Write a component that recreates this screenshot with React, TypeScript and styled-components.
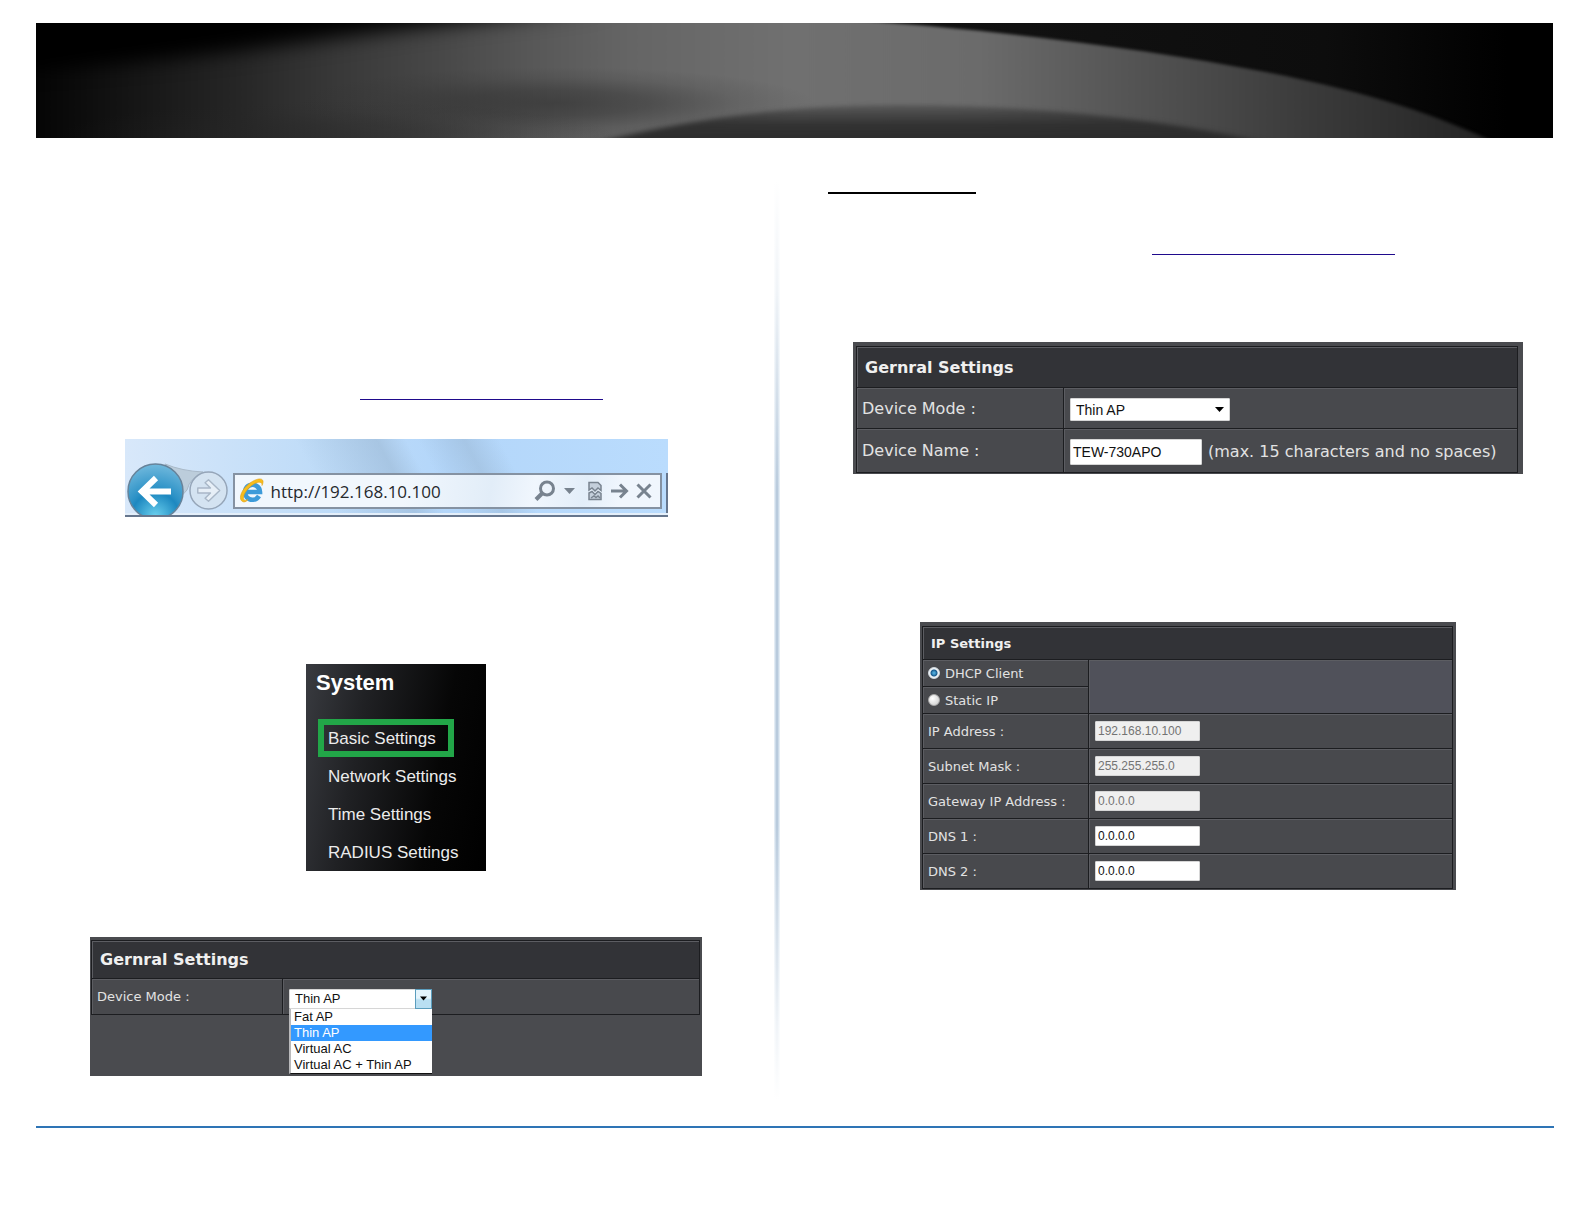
import React from "react";
import styled, { createGlobalStyle, css } from "styled-components";

const controlFont = `"Liberation Sans", Arial, sans-serif`;
const uiFont = `"DejaVu Sans", Verdana, sans-serif`;

const GlobalStyle = createGlobalStyle`
  *, *::before, *::after { box-sizing: border-box; }
  body { margin: 0; background: #fff; font-family: ${controlFont}; }
  button, input, select { font-family: ${controlFont}; }
`;

const Page = styled.div`
  padding-top: 23px;
`;

const Banner = styled.header`
  height: 115px;
  margin: 0 31px 0 36px;
  background: #000;
  svg { display: block; width: 100%; height: 100%; }
`;

const Columns = styled.main`
  display: grid;
  grid-template-columns: minmax(0, 1fr) 72px minmax(0, 1fr);
  padding: 0 36px 50px;
`;

const Column = styled.section<{ $top: number }>`
  display: flex;
  flex-direction: column;
  align-items: center;
  padding-top: ${(p) => p.$top}px;
`;

const Divider = styled.div`
  width: 6px;
  margin: 42px 0 -24px 18px;
  background:
    linear-gradient(to bottom, #fff 0%, rgba(255, 255, 255, 0.8) 12%, rgba(255, 255, 255, 0) 34%, rgba(255, 255, 255, 0) 70%, rgba(255, 255, 255, 0.8) 92%, #fff 100%),
    linear-gradient(to right, #eef5fb, #b9cbdd 40%, #b9cbdd 60%, #eef6fc);
`;

const FooterRule = styled.hr`
  height: 2px;
  margin: 0 30px 0 36px;
  border: 0;
  background: #2e74b5;
`;

const TitleRule = styled.div`
  align-self: flex-start;
  width: 148px;
  height: 24px;
  border-bottom: 2px solid #000;
`;

const RuleLink = styled.a`
  align-self: flex-start;
  display: block;
  width: 243px;
  height: 20px;
  margin-left: 324px;
  border-bottom: 1px solid #1f0a8c;
`;

const Spacer = styled.div<{ $h: number }>`
  flex: none;
  height: ${(p) => p.$h}px;
`;

/* Browser bar */

const BrowserBar = styled.div`
  width: 100%;
  max-width: 543px;
  height: 78px;
  display: flex;
  align-items: flex-start;
  padding: 24px 0 0 2px;
  overflow: hidden;
  border-bottom: 2px solid #66768d;
  background:
    linear-gradient(to bottom, transparent 74px, #e4effa 74px),
    linear-gradient(62deg, transparent 36%, rgba(150, 178, 205, 0.5) 50%, transparent 55%, transparent 57%, rgba(150, 178, 205, 0.45) 65%, transparent 71%),
    linear-gradient(to right, #d8e8fa, #bfdcf8 35%, #b3d6fa 60%, #badcfd);
`;

const NavButton = styled.button<{ $size: number; $drop: number }>`
  flex: none;
  width: ${(p) => p.$size}px;
  height: ${(p) => p.$size}px;
  margin: ${(p) => p.$drop}px 5px 0 0;
  padding: 0;
  border: 0;
  background: none;
  svg { display: block; width: 100%; height: 100%; overflow: visible; }
`;

const AddressBox = styled.label`
  flex: 1;
  min-width: 0;
  height: 36px;
  margin-top: 10px;
  display: flex;
  align-items: center;
  padding: 0 4px;
  border: 2px solid #8592a2;
  background: linear-gradient(100deg, #f1f7fd 40%, #e2edf8 60%, #f0f6fd 70%, #e3eef9 82%, #f0f6fd 90%);
`;

const AddressInput = styled.input`
  flex: 1;
  min-width: 0;
  height: 28px;
  margin-left: 6px;
  padding: 0;
  border: 0;
  outline: 0;
  background: transparent;
  color: #26292d;
  font: 17px "Open Sans", "Noto Sans", sans-serif;
`;

const Tool = styled.button<{ $w: number }>`
  flex: none;
  width: ${(p) => p.$w}px;
  height: 24px;
  display: flex;
  align-items: center;
  justify-content: center;
  padding: 0;
  border: 0;
  background: none;
`;

const NextEdge = styled.div`
  width: 2px;
  height: 40px;
  margin: 10px 0 0 4px;
  background: #66768d;
`;

/* System menu */

const SystemMenu = styled.nav`
  width: 180px;
  height: 207px;
  padding-top: 6px;
  background: linear-gradient(100deg, #393b40 0%, #202124 30%, #060606 70%, #000 100%);
  color: #ececec;
`;

const MenuTitle = styled.h2`
  margin: 0 0 24px 10px;
  font-size: 22px;
  line-height: 25px;
  color: #fff;
`;

const MenuList = styled.ul`
  margin: 0;
  padding: 0 0 0 12px;
  list-style: none;
`;

const MenuLink = styled.a<{ $active?: boolean }>`
  display: block;
  width: fit-content;
  height: 38px;
  padding: 1px 12px 0 4px;
  border: 6px solid ${(p) => (p.$active ? "#22a648" : "transparent")};
  color: inherit;
  font-size: 17px;
  line-height: 26px;
  white-space: nowrap;
  text-decoration: none;
`;

/* Settings panels */

const Panel = styled.div<{ $w: number; $pad: string }>`
  width: 100%;
  max-width: ${(p) => p.$w}px;
  padding: ${(p) => p.$pad};
  background: #4a4b4f;
`;

const Table = styled.table<{ $size: number }>`
  width: 100%;
  table-layout: fixed;
  border-collapse: separate;
  border-spacing: 0;
  border: solid #1c1d20;
  border-width: 0 1px 1px 0;
  font-family: ${uiFont};
  font-size: ${(p) => p.$size}px;
  color: #e2e2e2;
`;

const NameCol = styled.col<{ $w: number }>`
  width: ${(p) => p.$w}px;
`;

const cell = css`
  padding: 0 0 0 6px;
  border: solid #1c1d20;
  border-width: 1px 0 0 1px;
  box-shadow: inset 1px 1px #5c5d62;
  text-align: left;
  white-space: nowrap;
`;

const Head = styled.th<{ $h: number; $size: number }>`
  ${cell}
  height: ${(p) => p.$h}px;
  padding-left: 8px;
  background: #323337;
  color: #f0f0f0;
  font-size: ${(p) => p.$size}px;
`;

const Name = styled.th<{ $h: number }>`
  ${cell}
  height: ${(p) => p.$h}px;
  padding-left: 5px;
  font-weight: normal;
  background: #48494d;
`;

const Value = styled.td<{ $plain?: boolean; $drop?: number }>`
  ${cell}
  padding-top: ${(p) => p.$drop ?? 0}px;
  background: ${(p) => (p.$plain ? "#50515a" : "#48494d")};
`;

const Line = styled.div`
  display: flex;
  align-items: center;
  gap: 6px;
`;

const TextBox = styled.input<{ $w: number; $h: number; $size: number }>`
  display: block;
  width: ${(p) => p.$w}px;
  height: ${(p) => p.$h}px;
  padding: 0 2px;
  border: 1px solid #d6d6d6;
  border-radius: 1px;
  background: #fff;
  color: #111;
  font-size: ${(p) => p.$size}px;
  &:disabled { background: #efefef; color: #737373; }
`;

const SelectWrap = styled.div<{ $w: number }>`
  position: relative;
  width: ${(p) => p.$w}px;
`;

const SelectBox = styled.select<{ $h: number; $size: number }>`
  appearance: none;
  display: block;
  width: 100%;
  height: ${(p) => p.$h}px;
  padding: 0 20px 0 5px;
  border: 1px solid #d6d6d6;
  border-radius: 1px;
  background: #fff;
  color: #111;
  font-size: ${(p) => p.$size}px;
`;

const Arrow = styled.span<{ $boxed?: boolean }>`
  position: absolute;
  top: 0;
  right: 0;
  bottom: 0;
  width: ${(p) => (p.$boxed ? 17 : 22)}px;
  display: flex;
  align-items: center;
  justify-content: center;
  pointer-events: none;
  ${(p) =>
    p.$boxed &&
    css`
      border: 1px solid #5b9dbd;
      background: linear-gradient(#e4f4fc 45%, #b9dff2 55%);
    `}
`;

const OptionList = styled.ul`
  position: absolute;
  top: 100%;
  left: 0;
  right: 0;
  margin: 0;
  padding: 0;
  list-style: none;
  border: solid #b9b9bb;
  border-width: 0 0 0 2px;
  border-bottom: 1px solid #111;
  background: #fff;
  color: #111;
  font: 13px/16px ${controlFont};
`;

const Option = styled.li<{ $selected?: boolean }>`
  height: 16px;
  padding-left: 3px;
  ${(p) => p.$selected && css`background: #3399ff; color: #fff;`}
`;

const RadioLabel = styled.label`
  display: flex;
  align-items: center;
  gap: 5px;
`;

const Radio = styled.input`
  appearance: none;
  width: 12px;
  height: 12px;
  margin: 0;
  border: 1px solid #aaa;
  border-radius: 50%;
  background: radial-gradient(circle at 35% 35%, #fff, #c8c8c8);
  &:checked {
    border-color: #d4dce2;
    background: radial-gradient(circle at 50% 50%, #4aa5d6 0 1px, #17598c 3px, #eef3f6 4px);
  }
`;

const DownArrow = ({ size = 9 }: { size?: number }) => (
  <svg width={size} height="5" viewBox="0 0 9 5" aria-hidden="true">
    <path d="M0 0H9L4.500 5Z" fill="#000" />
  </svg>
);

const BannerArt = () => (
  <svg viewBox="0 0 1517 115" preserveAspectRatio="none" colorInterpolationFilters="sRGB" aria-hidden="true">
    <defs>
      <linearGradient id="right">
        <stop offset="0.55" stopColor="#131313" />
        <stop offset="0.85" stopColor="#0d0d0d" />
        <stop offset="0.97" stopColor="#000" />
      </linearGradient>
      <linearGradient id="sweep" gradientUnits="userSpaceOnUse" x1="0" x2="1450" y1="0" y2="0">
        <stop offset="0" stopColor="#050505" />
        <stop offset="0.07" stopColor="#161616" />
        <stop offset="0.14" stopColor="#262626" />
        <stop offset="0.21" stopColor="#393939" />
        <stop offset="0.28" stopColor="#484848" />
        <stop offset="0.345" stopColor="#585858" />
        <stop offset="0.41" stopColor="#656565" />
        <stop offset="0.52" stopColor="#707070" />
        <stop offset="0.65" stopColor="#6b6b6b" />
        <stop offset="0.76" stopColor="#535353" />
        <stop offset="0.87" stopColor="#3c3c3c" />
        <stop offset="1" stopColor="#242424" />
      </linearGradient>
      <linearGradient id="arc" x1="0" x2="0" y1="0" y2="1">
        <stop offset="0" stopColor="#2b2b2b" stopOpacity="0.3" />
        <stop offset="0.5" stopColor="#2b2b2b" stopOpacity="0.9" />
        <stop offset="1" stopColor="#2b2b2b" />
      </linearGradient>
      <radialGradient id="shade">
        <stop offset="0" stopColor="#262626" stopOpacity="0.5" />
        <stop offset="0.35" stopColor="#262626" stopOpacity="0.38" />
        <stop offset="0.7" stopColor="#262626" stopOpacity="0.12" />
        <stop offset="1" stopColor="#262626" stopOpacity="0" />
      </radialGradient>
      <filter id="edge" x="-5%" y="-10%" width="110%" height="120%"><feGaussianBlur stdDeviation="2.500 1.500" /></filter>
      <filter id="arcBlur" x="-20%" y="-50%" width="140%" height="200%"><feGaussianBlur stdDeviation="8 2" /></filter>
      <filter id="cornerBlur" filterUnits="userSpaceOnUse" x="-500" y="-200" width="1500" height="500"><feGaussianBlur stdDeviation="40 9" /></filter>
    </defs>
    <rect width="1517" height="115" fill="url(#right)" />
    <path d="M-20 130V-10H690C890 -2 1080 20 1230 49C1340 71 1400 92 1460 120V130Z" fill="url(#sweep)" filter="url(#edge)" />
    <path d="M-300 -100H560L500 -8C400 2 330 10 260 20C160 34 80 42 -20 48L-300 60Z" fill="#000" filter="url(#cornerBlur)" />
    <ellipse cx="520" cy="80" rx="260" ry="36" fill="url(#shade)" />
    <ellipse cx="300" cy="114" rx="280" ry="36" fill="url(#shade)" />
    <path d="M550 122C650 96 750 82 860 82C1000 82 1130 96 1240 122Z" fill="url(#arc)" filter="url(#arcBlur)" />
  </svg>
);

const BackIcon = () => (
  <svg viewBox="0 0 57 57" aria-hidden="true">
    <defs>
      <radialGradient id="back" cx="0.5" cy="0.95" r="0.95">
        <stop offset="0" stopColor="#6bd0ee" />
        <stop offset="0.45" stopColor="#1d88c0" />
        <stop offset="0.52" stopColor="#2b91c6" />
        <stop offset="1" stopColor="#71b9dd" />
      </radialGradient>
    </defs>
    <path d="M38 1Q55 8 76 9Q63 15 60 27L50 38Z" fill="#bccddb" stroke="#a9b9c8" />
    <circle cx="28.500" cy="28.500" r="27.500" fill="url(#back)" stroke="#67839a" strokeWidth="1.500" />
    <path d="M29 15L15 28.500L29 42M16 28.500H44" fill="none" stroke="#fff" strokeWidth="6" />
  </svg>
);

const ForwardIcon = () => (
  <svg viewBox="0 0 40 40" aria-hidden="true">
    <circle cx="20" cy="20" r="19" fill="#d4e3f1" stroke="#95a5b8" strokeWidth="1.500" />
    <path d="M9 17.500H22L16.500 12L20 9L31.500 20L20 31L16.500 28L22 22.500H9Z" fill="#e7eff7" stroke="#a9b7c7" strokeWidth="1.500" strokeLinejoin="round" />
  </svg>
);

const BrowserIcon = () => (
  <svg width="26" height="26" viewBox="0 0 26 26" aria-hidden="true">
    <path d="M20 18A7.500 7.500 0 1 1 21 14H8" fill="none" stroke="#3d9bd9" strokeWidth="4.600" />
    <path d="M5 24C-1 23 1 14 8 7.500S23 -1 24 3C24.300 4.500 23.500 6.500 23 7.500C23.500 4 20.500 2.800 14.500 6.200S2.500 18.500 5 22Q6.500 23 9 21.500Q7 24 5 24Z" fill="#f8bd1c" stroke="#e2a011" strokeWidth="0.600" />
  </svg>
);

const grey = "#78838f";

const BrowserToolbar = () => (
  <BrowserBar>
    <NavButton $size={57} $drop={0} aria-label="Back"><BackIcon /></NavButton>
    <NavButton $size={39} $drop={8} aria-label="Forward"><ForwardIcon /></NavButton>
    <AddressBox>
      <BrowserIcon />
      <AddressInput aria-label="Address" defaultValue="http://192.168.10.100" />
      <Tool $w={26} aria-label="Search">
        <svg width="22" height="22" viewBox="0 0 22 22" fill="none" stroke={grey}>
          <circle cx="13" cy="8.500" r="6.500" strokeWidth="3" />
          <path d="M8.500 13L2 19.500" strokeWidth="4" />
        </svg>
      </Tool>
      <Tool $w={24} aria-label="Show addresses">
        <svg width="11" height="6" viewBox="0 0 11 6"><path d="M0 0H11L5.500 6Z" fill={grey} /></svg>
      </Tool>
      <Tool $w={26} aria-label="Compatibility view">
        <svg width="16" height="20" viewBox="0 0 16 20" fill="#c4cfdb" stroke={grey} strokeWidth="1.500">
          <path d="M2 9V1.500H11L14 4.500V9.500L11 7L8 10L5 7Z" />
          <path d="M2 12L5 10.500L8 13.500L11 10.500L14 12.500V18.500H2Z" />
          <path d="M4 17L7 15L9 16.500L11 15L13 17" fill="none" />
        </svg>
      </Tool>
      <Tool $w={24} aria-label="Go">
        <svg width="18" height="16" viewBox="0 0 18 16" fill="none" stroke={grey} strokeWidth="3">
          <path d="M0 8H15M9 1.500L15.500 8L9 14.500" />
        </svg>
      </Tool>
      <Tool $w={24} aria-label="Stop">
        <svg width="16" height="16" viewBox="0 0 16 16" fill="none" stroke={grey} strokeWidth="3">
          <path d="M1.500 1.500L14.500 14.500M14.500 1.500L1.500 14.500" />
        </svg>
      </Tool>
    </AddressBox>
    <NextEdge />
  </BrowserBar>
);

const modes = ["Fat AP", "Thin AP", "Virtual AC", "Virtual AC + Thin AP"];
const menu = ["Basic Settings", "Network Settings", "Time Settings", "RADIUS Settings"];

const addresses = [
  { id: "ip", label: "IP Address :", value: "192.168.10.100", disabled: true },
  { id: "mask", label: "Subnet Mask :", value: "255.255.255.0", disabled: true },
  { id: "gateway", label: "Gateway IP Address :", value: "0.0.0.0", disabled: true },
  { id: "dns1", label: "DNS 1 :", value: "0.0.0.0", disabled: false },
  { id: "dns2", label: "DNS 2 :", value: "0.0.0.0", disabled: false },
];

const ModePanel = () => (
  <Panel $w={612} $pad="3px 2px 61px 1px">
    <Table $size={13}>
      <colgroup><NameCol $w={191} /><col /></colgroup>
      <tbody>
        <tr><Head $h={38} $size={16} colSpan={2}>Gernral Settings</Head></tr>
        <tr>
          <Name $h={36}><label htmlFor="mode-open">Device Mode :</label></Name>
          <Value $drop={4}>
            <SelectWrap $w={143}>
              <SelectBox id="mode-open" $h={20} $size={13} defaultValue="Thin AP">
                {modes.map((m) => <option key={m}>{m}</option>)}
              </SelectBox>
              <Arrow $boxed><DownArrow size={7} /></Arrow>
              <OptionList role="listbox" aria-label="Device Mode">
                {modes.map((m) => (
                  <Option key={m} role="option" aria-selected={m === "Thin AP"} $selected={m === "Thin AP"}>{m}</Option>
                ))}
              </OptionList>
            </SelectWrap>
          </Value>
        </tr>
      </tbody>
    </Table>
  </Panel>
);

const GeneralPanel = () => (
  <Panel $w={670} $pad="4px 5px 1px 3px">
    <Table $size={16}>
      <colgroup><NameCol $w={207} /><col /></colgroup>
      <tbody>
        <tr><Head $h={41} $size={16} colSpan={2}>Gernral Settings</Head></tr>
        <tr>
          <Name $h={41}><label htmlFor="mode">Device Mode :</label></Name>
          <Value $drop={3}>
            <SelectWrap $w={160}>
              <SelectBox id="mode" $h={23} $size={14} defaultValue="Thin AP">
                {modes.map((m) => <option key={m}>{m}</option>)}
              </SelectBox>
              <Arrow><DownArrow /></Arrow>
            </SelectWrap>
          </Value>
        </tr>
        <tr>
          <Name $h={44}><label htmlFor="name">Device Name :</label></Name>
          <Value $drop={2}>
            <Line>
              <TextBox id="name" $w={132} $h={26} $size={14} defaultValue="TEW-730APO" />
              <span>(max. 15 characters and no spaces)</span>
            </Line>
          </Value>
        </tr>
      </tbody>
    </Table>
  </Panel>
);

const IpPanel = () => (
  <Panel $w={536} $pad="4px 3px 1px 2px">
    <Table $size={13}>
      <colgroup><NameCol $w={166} /><col /></colgroup>
      <tbody>
        <tr><Head $h={33} $size={13} colSpan={2}>IP Settings</Head></tr>
        <tr>
          <Name $h={27}>
            <RadioLabel><Radio type="radio" name="source" defaultChecked />DHCP Client</RadioLabel>
          </Name>
          <Value $plain rowSpan={2} />
        </tr>
        <tr>
          <Name $h={27}>
            <RadioLabel><Radio type="radio" name="source" />Static IP</RadioLabel>
          </Name>
        </tr>
        {addresses.map((a) => (
          <tr key={a.id}>
            <Name $h={35}><label htmlFor={a.id}>{a.label}</label></Name>
            <Value>
              <TextBox id={a.id} $w={105} $h={20} $size={12} defaultValue={a.value} disabled={a.disabled} />
            </Value>
          </tr>
        ))}
      </tbody>
    </Table>
  </Panel>
);

export default function App() {
  return (
    <>
      <GlobalStyle />
      <Page>
        <Banner><BannerArt /></Banner>
        <Columns>
          <Column $top={242}>
            <RuleLink href="#management" aria-label="Access management page" />
            <Spacer $h={39} />
            <BrowserToolbar />
            <Spacer $h={147} />
            <SystemMenu>
              <MenuTitle>System</MenuTitle>
              <MenuList>
                {menu.map((item, i) => (
                  <li key={item}><MenuLink href="#settings" $active={i === 0}>{item}</MenuLink></li>
                ))}
              </MenuList>
            </SystemMenu>
            <Spacer $h={66} />
            <ModePanel />
          </Column>
          <Divider />
          <Column $top={32}>
            <TitleRule />
            <Spacer $h={41} />
            <RuleLink href="#management" aria-label="Access management page" />
            <Spacer $h={87} />
            <GeneralPanel />
            <Spacer $h={148} />
            <IpPanel />
          </Column>
        </Columns>
        <FooterRule />
      </Page>
    </>
  );
}
